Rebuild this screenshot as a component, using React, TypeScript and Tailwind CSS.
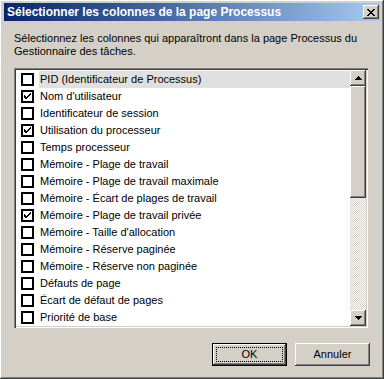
import React, { useState } from "react";

const columns: { label: string; checked: boolean }[] = [
  { label: "PID (Identificateur de Processus)", checked: false },
  { label: "Nom d'utilisateur", checked: true },
  { label: "Identificateur de session", checked: false },
  { label: "Utilisation du processeur", checked: true },
  { label: "Temps processeur", checked: false },
  { label: "Mémoire - Plage de travail", checked: false },
  { label: "Mémoire - Plage de travail maximale", checked: false },
  { label: "Mémoire - Écart de plages de travail", checked: false },
  { label: "Mémoire - Plage de travail privée", checked: true },
  { label: "Mémoire - Taille d'allocation", checked: false },
  { label: "Mémoire - Réserve paginée", checked: false },
  { label: "Mémoire - Réserve non paginée", checked: false },
  { label: "Défauts de page", checked: false },
  { label: "Écart de défaut de pages", checked: false },
  { label: "Priorité de base", checked: false },
];

const raised =
  "shadow-[inset_-1px_-1px_#404040,inset_1px_1px_#ffffff,inset_-2px_-2px_#808080,inset_2px_2px_#d4d0c8]";

function Check({ on }: { on: boolean }) {
  return (
    <span className="w-[13px] h-[13px] border-2 border-black bg-white shrink-0 flex items-center justify-center">
      {on && (
        <svg width="9" height="9" viewBox="0 0 9 9" shapeRendering="crispEdges">
          <path d="M1 3h1v3h1v1H2v-1H1zM2 4h1v3H2zM3 5h1v2H3zM4 4h1v2H4zM5 3h1v2H5zM6 2h1v2H6zM7 1h1v2H7z" fill="#000" />
        </svg>
      )}
    </span>
  );
}

function Arrow({ up }: { up: boolean }) {
  return (
    <svg width="7" height="4" viewBox="0 0 7 4" shapeRendering="crispEdges">
      <path d={up ? "M3 0h1v1h1v1h1v1h1v1H0V3h1V2h1V1h1z" : "M0 0h7v1H6v1H5v1H4v1H3V3H2V2H1V1H0z"} fill="#000" />
    </svg>
  );
}

export default function App() {
  const [items, setItems] = useState(columns);

  const toggle = (i: number) =>
    setItems((prev) => prev.map((c, j) => (j === i ? { ...c, checked: !c.checked } : c)));

  return (
    <div
      className={`w-[384px] h-[379px] bg-[#d4d0c8] p-[3px] flex flex-col text-[11px] text-black ${raised}`}
      style={{ fontFamily: '"Liberation Sans", Arial, sans-serif' }}
    >
      {/* title bar */}
      <div className="h-[18px] mx-px bg-gradient-to-r from-[#0a246a] to-[#a6caf0] flex items-center justify-between pl-[3px] pr-px">
        <span className="text-white font-bold text-[12px] leading-none">
          Sélectionner les colonnes de la page Processus
        </span>
        <button className={`w-[16px] h-[14px] bg-[#d4d0c8] flex items-center justify-center ${raised}`}>
          <svg width="8" height="7" viewBox="0 0 8 7" shapeRendering="crispEdges">
            <path d="M0 0h2v1h1v1h2V1h1V0h2v1H7v1H6v1H5v1h1v1h1v1h1v1H6V6H5V5H3v1H2v1H0V6h1V5h1V4h1V3H2V2H1V1H0z" fill="#000" />
          </svg>
        </button>
      </div>

      {/* body */}
      <div className="flex-1 flex flex-col px-[11px] pt-[11px]">
        <p className="leading-[13px] mb-[10px]">
          Sélectionnez les colonnes qui apparaîtront dans la page Processus du Gestionnaire des tâches.
        </p>

        <div className="h-[260px] mr-[2px] shadow-[inset_1px_1px_#808080,inset_2px_2px_#404040,inset_-1px_-1px_#ffffff,inset_-2px_-2px_#d4d0c8] p-[2px] flex">
          <ul className="flex-1 bg-white overflow-hidden pt-px">
            {items.map((c, i) => (
              <li
                key={c.label}
                onClick={() => toggle(i)}
                className="h-[17px] flex items-center pl-[5px] gap-[5px]"
              >
                <Check on={c.checked} />
                <span
                  className={`flex-1 h-full flex items-center pl-[1px] ${i === 0 ? "bg-[#e0e0e0]" : ""}`}
                >
                  {c.label}
                </span>
              </li>
            ))}
          </ul>

          {/* scrollbar */}
          <div className="w-[16px] flex flex-col bg-[repeating-conic-gradient(#ffffff_0%_25%,#d4d0c8_0%_50%)] bg-[length:2px_2px]">
            <div className={`h-[16px] bg-[#d4d0c8] flex items-center justify-center ${raised}`}>
              <Arrow up />
            </div>
            <div className={`h-[112px] bg-[#d4d0c8] ${raised}`} />
            <div className="flex-1" />
            <div className={`h-[16px] bg-[#d4d0c8] flex items-center justify-center ${raised}`}>
              <Arrow up={false} />
            </div>
          </div>
        </div>

        <div className="flex justify-end gap-[8px] mt-[15px]">
          <button className="w-[75px] h-[23px] border border-black bg-[#d4d0c8] p-0 flex">
            <span className={`flex-1 flex items-center justify-center p-[3px] ${raised}`}>
              <span className="w-full h-full flex items-center justify-center outline-1 outline-dotted outline-black -outline-offset-1">
                OK
              </span>
            </span>
          </button>
          <button className={`w-[75px] h-[23px] bg-[#d4d0c8] flex items-center justify-center ${raised}`}>
            Annuler
          </button>
        </div>
      </div>
    </div>
  );
}
